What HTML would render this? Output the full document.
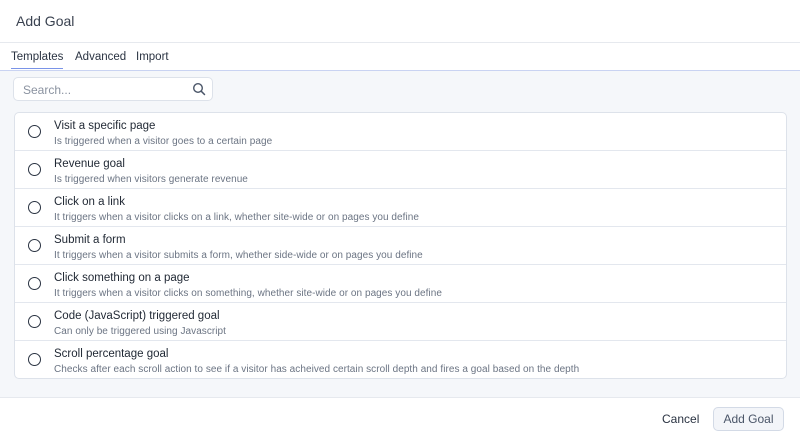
<!DOCTYPE html>
<html><head><style>
*{box-sizing:border-box;margin:0;padding:0}
body{width:800px;height:439px;overflow:hidden;font-family:"Liberation Sans",sans-serif;background:#fff;position:relative;color:#1f2733}
.hdr{position:absolute;left:0;top:0;width:800px;height:43px;border-bottom:1px solid #e6e9ee}
.hdr span{position:absolute;left:16px;top:13px;font-size:14px;color:#3a4250}
.tabs{position:absolute;left:0;top:43px;width:800px;height:28px;border-bottom:1px solid #c9d3f2;font-size:11.5px}
.tabs span{position:absolute;top:8px;color:#2a3342}
.tabs .act{border-bottom:1px solid #7a94e8;padding-bottom:5px}
.body{position:absolute;left:0;top:71px;width:800px;height:327px;background:#f5f7fa;border-bottom:1px solid #e6e9ee}
.search{position:absolute;left:13px;top:6px;width:200px;height:24px;background:#fff;border:1px solid #dde2ea;border-radius:5px}
.search span{position:absolute;left:9px;top:5px;font-size:12px;color:#8a92a0}
.search svg{position:absolute;right:6px;top:4px}
.list{position:absolute;left:14px;top:41px;width:773px;height:267px;background:#fff;border:1px solid #dde2ea;border-radius:5px}
.row{height:38px;border-bottom:1px solid #e3e7ee;position:relative}
.row:last-child{border-bottom:none}
.radio{position:absolute;left:13px;top:12px;width:13px;height:13px;border:1.5px solid #2a3342;border-radius:50%}
.t{position:absolute;left:39px;top:7px;font-size:11.5px;color:#1f2733}
.d{position:absolute;left:39px;top:23px;font-size:10px;letter-spacing:0.05px;color:#6b7483}
.cancel{position:absolute;left:662px;top:412px;font-size:12px;color:#2a3342}
.btn{position:absolute;left:713px;top:407px;width:71px;height:24px;border:1px solid #d3dae6;border-radius:5px;background:#f3f5f9;font-size:12px;color:#4a5568;text-align:center;line-height:22px}
</style></head><body>
<div class="hdr"><span>Add Goal</span></div>
<div class="tabs"><span class="act" style="left:11px">Templates</span><span style="left:75px">Advanced</span><span style="left:136px">Import</span></div>
<div class="body">
<div class="search"><span>Search...</span><svg width="14" height="14" viewBox="0 0 14 14"><circle cx="6" cy="6" r="4.3" fill="none" stroke="#4a5568" stroke-width="1.4"/><path d="M9.2 9.2L12.5 12.5" stroke="#4a5568" stroke-width="1.5" stroke-linecap="round"/></svg></div>
<div class="list">
<div class="row"><div class="radio"></div><div class="t">Visit a specific page</div><div class="d">Is triggered when a visitor goes to a certain page</div></div>
<div class="row"><div class="radio"></div><div class="t">Revenue goal</div><div class="d">Is triggered when visitors generate revenue</div></div>
<div class="row"><div class="radio"></div><div class="t">Click on a link</div><div class="d">It triggers when a visitor clicks on a link, whether site-wide or on pages you define</div></div>
<div class="row"><div class="radio"></div><div class="t">Submit a form</div><div class="d">It triggers when a visitor submits a form, whether side-wide or on pages you define</div></div>
<div class="row"><div class="radio"></div><div class="t">Click something on a page</div><div class="d">It triggers when a visitor clicks on something, whether site-wide or on pages you define</div></div>
<div class="row"><div class="radio"></div><div class="t">Code (JavaScript) triggered goal</div><div class="d">Can only be triggered using Javascript</div></div>
<div class="row"><div class="radio"></div><div class="t">Scroll percentage goal</div><div class="d">Checks after each scroll action to see if a visitor has acheived certain scroll depth and fires a goal based on the depth</div></div>
</div>
</div>
<div class="cancel">Cancel</div>
<div class="btn">Add Goal</div>
</body></html>
